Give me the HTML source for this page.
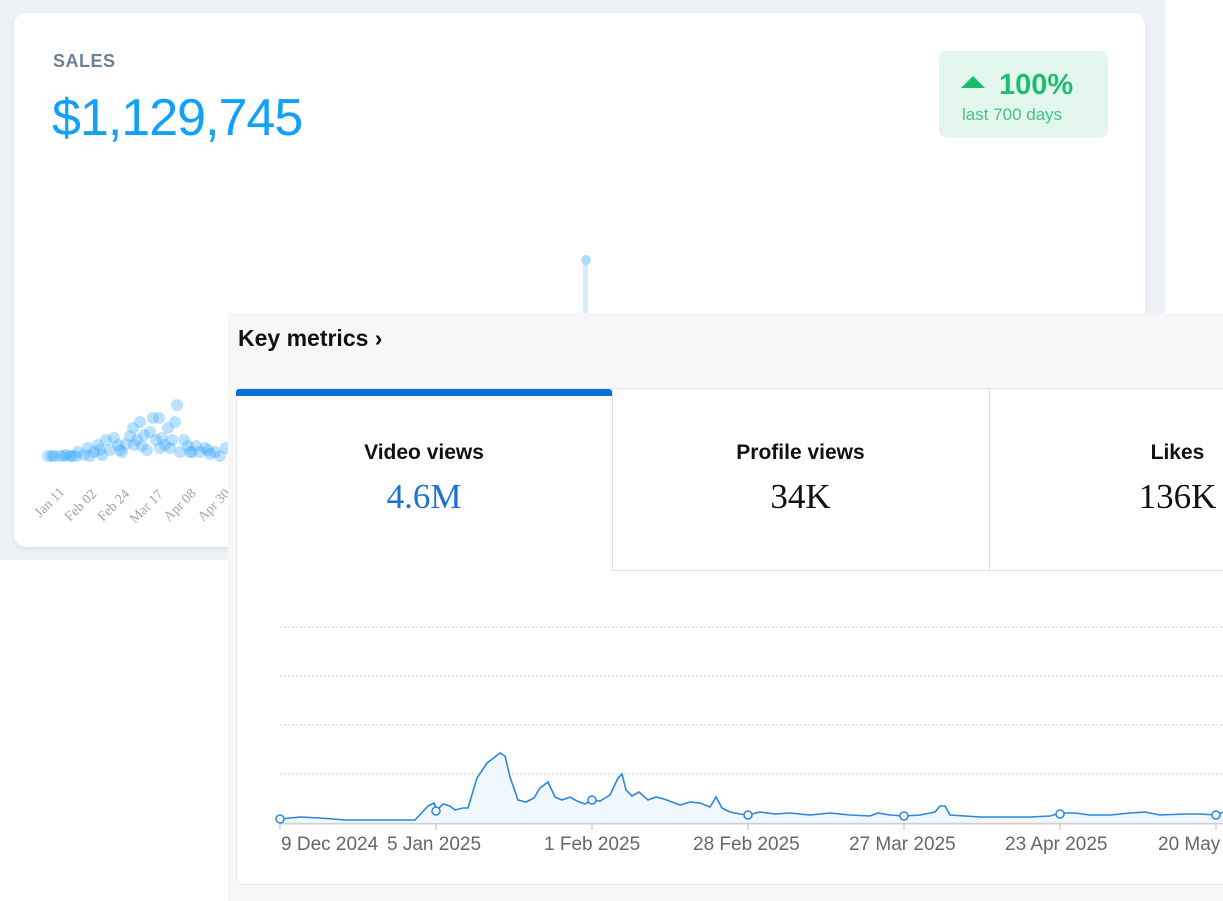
<!DOCTYPE html>
<html><head><meta charset="utf-8"><style>
*{margin:0;padding:0;box-sizing:border-box}
body{width:1223px;height:901px;overflow:hidden;background:#fff;font-family:"Liberation Sans",sans-serif;position:relative}
.bg{position:absolute;left:0;top:0;width:1165px;height:560px;background:#eef2f7}
.card{position:absolute;left:14px;top:13px;width:1131px;height:534px;background:#fff;border-radius:12px;box-shadow:0 2px 4px rgba(150,170,200,.25)}
.sales{position:absolute;left:53px;top:51px;font-size:18px;font-weight:bold;color:#6e7f93;letter-spacing:.5px}
.amt{position:absolute;left:52px;top:88px;font-size:52px;color:#11a0fa;letter-spacing:-1px}
.badge{position:absolute;left:939px;top:51px;width:169px;height:87px;background:#e3f7ee;border-radius:8px;color:#1fbd6e}
.badge .p{position:absolute;left:22px;top:18px;font-size:29px;font-weight:bold}
.badge .p:before{content:"";display:inline-block;width:0;height:0;border-left:12px solid transparent;border-right:12px solid transparent;border-bottom:12px solid #17bb6c;margin-right:14px;vertical-align:6px}
.badge .l{position:absolute;left:23px;top:54px;font-size:17px;color:#3fc585}
.km{position:absolute;left:228px;top:313px;width:995px;height:588px;background:#f7f7f7}
.kmt{position:absolute;left:238px;top:325px;font-size:23px;font-weight:bold;color:#111}
.inner{position:absolute;left:236px;top:388px;width:1000px;height:497px;background:#fff;border:1px solid #e6e6e6;border-radius:8px}
.bar{position:absolute;left:236px;top:389px;width:376px;height:7px;background:#0a6fd8;border-radius:3px 3px 0 0}
.tab{position:absolute;top:389px;height:182px;text-align:center}
.tab .n{position:absolute;top:52px;width:100%;font-size:21px;font-weight:bold;color:#111}
.tab .v{position:absolute;top:88px;width:100%;font-family:"Liberation Serif",serif;font-size:35px;color:#111}
.lbl{position:absolute;top:834px;font-size:19px;color:#666}
</style></head><body>
<div class="bg"></div>
<div class="card"></div>
<div class="sales">SALES</div>
<div class="amt">$1,129,745</div>
<div class="badge"><div class="p">100%</div><div class="l">last 700 days</div></div>
<svg style="position:absolute;left:0;top:0" width="1223" height="560">
<rect x="583" y="262" width="5" height="60" fill="#d4ecfd"/>
<circle cx="586" cy="260" r="5" fill="#aedcfd"/>
<g fill="#3aa8fb" fill-opacity=".35">
<circle cx="48" cy="456" r="6"/><circle cx="54" cy="456" r="6"/><circle cx="60" cy="456" r="6"/><circle cx="66" cy="455" r="6"/><circle cx="72" cy="456" r="6"/><circle cx="78" cy="452" r="6"/><circle cx="84" cy="455" r="6"/><circle cx="88" cy="448" r="6"/><circle cx="94" cy="452" r="6"/><circle cx="98" cy="445" r="6"/><circle cx="102" cy="455" r="6"/><circle cx="106" cy="440" r="6"/><circle cx="110" cy="450" r="6"/><circle cx="114" cy="438" r="6"/><circle cx="118" cy="445" r="6"/><circle cx="122" cy="452" r="6"/><circle cx="126" cy="444" r="6"/><circle cx="130" cy="436" r="6"/><circle cx="133" cy="428" r="6"/><circle cx="137" cy="440" r="6"/><circle cx="140" cy="422" r="6"/><circle cx="144" cy="435" r="6"/><circle cx="147" cy="450" r="6"/><circle cx="150" cy="432" r="6"/><circle cx="153" cy="418" r="6"/><circle cx="156" cy="440" r="6"/><circle cx="159" cy="418" r="6"/><circle cx="162" cy="438" r="6"/><circle cx="165" cy="445" r="6"/><circle cx="168" cy="428" r="6"/><circle cx="172" cy="440" r="6"/><circle cx="175" cy="422" r="6"/><circle cx="177" cy="405" r="6"/><circle cx="180" cy="452" r="6"/><circle cx="184" cy="440" r="6"/><circle cx="188" cy="446" r="6"/><circle cx="192" cy="452" r="6"/><circle cx="196" cy="446" r="6"/><circle cx="200" cy="452" r="6"/><circle cx="205" cy="448" r="6"/><circle cx="210" cy="454" r="6"/><circle cx="215" cy="452" r="6"/><circle cx="220" cy="456" r="6"/><circle cx="226" cy="448" r="6"/>
<circle cx="52" cy="456" r="6"/><circle cx="64" cy="456" r="6"/><circle cx="76" cy="456" r="6"/><circle cx="90" cy="456" r="6"/><circle cx="100" cy="450" r="6"/><circle cx="120" cy="450" r="6"/><circle cx="142" cy="446" r="6"/><circle cx="160" cy="448" r="6"/><circle cx="190" cy="452" r="6"/><circle cx="208" cy="450" r="6"/><circle cx="70" cy="456" r="6"/><circle cx="134" cy="445" r="6"/><circle cx="170" cy="448" r="6"/>
</g>
<g font-family="Liberation Serif,serif" font-size="14" fill="#9aa4b1">
<text transform="translate(40,518) rotate(-45)">Jan 11</text>
<text transform="translate(70,522) rotate(-45)">Feb 02</text>
<text transform="translate(103,522) rotate(-45)">Feb 24</text>
<text transform="translate(135,524) rotate(-45)">Mar 17</text>
<text transform="translate(169,522) rotate(-45)">Apr 08</text>
<text transform="translate(203,522) rotate(-45)">Apr 30</text>
</g>
</svg>
<div class="km"></div>
<div class="kmt">Key metrics ›</div>
<div class="inner"></div>
<div style="position:absolute;left:612px;top:389px;width:611px;height:182px;border-left:1px solid #e0e0e0;border-bottom:1px solid #e0e0e0"></div>
<div style="position:absolute;left:989px;top:389px;width:1px;height:182px;background:#e0e0e0"></div>
<div class="bar"></div>
<div class="tab" style="left:236px;width:376px"><div class="n">Video views</div><div class="v" style="color:#1a73d0">4.6M</div></div>
<div class="tab" style="left:612px;width:377px"><div class="n">Profile views</div><div class="v">34K</div></div>
<div class="tab" style="left:989px;width:377px"><div class="n">Likes</div><div class="v">136K</div></div>
<svg style="position:absolute;left:0;top:0" width="1223" height="901">
<g stroke="#cfcfcf" stroke-dasharray="2 2" stroke-width="1"><line x1="280" y1="627" x2="1223" y2="627"/><line x1="280" y1="676" x2="1223" y2="676"/><line x1="280" y1="725" x2="1223" y2="725"/><line x1="280" y1="774" x2="1223" y2="774"/></g>
<line x1="280" y1="823.5" x2="1223" y2="823.5" stroke="#d0d0d0" stroke-width="2"/>
<g stroke="#bbb"><line x1="280" y1="823" x2="280" y2="830"/><line x1="436" y1="823" x2="436" y2="830"/><line x1="592" y1="823" x2="592" y2="830"/><line x1="748" y1="823" x2="748" y2="830"/><line x1="904" y1="823" x2="904" y2="830"/><line x1="1060" y1="823" x2="1060" y2="830"/><line x1="1216" y1="823" x2="1216" y2="830"/></g>
<path d="M280,819 L300,817 L320,818 L345,820 L380,820 L415,820 L428,806 L434,803 L437,810 L443,804 L450,806 L455,810 L463,808 L468,808 L477,778 L487,763 L500,753 L505,756 L510,777 L518,800 L526,802 L534,798 L540,788 L548,782 L555,797 L562,800 L570,797 L577,801 L585,804 L592,800 L600,801 L610,795 L618,778 L622,774 L626,790 L632,796 L639,792 L648,800 L656,797 L664,799 L672,802 L680,805 L690,802 L700,803 L710,807 L716,797 L722,808 L730,812 L740,814 L748,815 L760,812 L775,814 L790,813 L810,815 L830,813 L850,815 L870,816 L878,813 L890,815 L904,816 L920,815 L935,812 L940,806 L945,806 L950,815 L980,817 L1000,817 L1030,817 L1050,816 L1060,813 L1075,813 L1090,815 L1110,815 L1130,813 L1145,812 L1160,815 L1185,814 L1200,814 L1216,815 L1223,812 L1223,823 L280,823 Z" fill="#eaf3fd" fill-opacity=".7"/>
<path d="M280,819 L300,817 L320,818 L345,820 L380,820 L415,820 L428,806 L434,803 L437,810 L443,804 L450,806 L455,810 L463,808 L468,808 L477,778 L487,763 L500,753 L505,756 L510,777 L518,800 L526,802 L534,798 L540,788 L548,782 L555,797 L562,800 L570,797 L577,801 L585,804 L592,800 L600,801 L610,795 L618,778 L622,774 L626,790 L632,796 L639,792 L648,800 L656,797 L664,799 L672,802 L680,805 L690,802 L700,803 L710,807 L716,797 L722,808 L730,812 L740,814 L748,815 L760,812 L775,814 L790,813 L810,815 L830,813 L850,815 L870,816 L878,813 L890,815 L904,816 L920,815 L935,812 L940,806 L945,806 L950,815 L980,817 L1000,817 L1030,817 L1050,816 L1060,813 L1075,813 L1090,815 L1110,815 L1130,813 L1145,812 L1160,815 L1185,814 L1200,814 L1216,815 L1223,812" fill="none" stroke="#2b86dc" stroke-width="1.6"/>
<g fill="#fff" stroke="#2b86dc" stroke-width="1.5"><circle cx="280" cy="819" r="4"/><circle cx="436" cy="811" r="4"/><circle cx="592" cy="800" r="4"/><circle cx="748" cy="815" r="4"/><circle cx="904" cy="816" r="4"/><circle cx="1060" cy="814" r="4"/><circle cx="1216" cy="815" r="4"/></g>
</svg>
<div class="lbl" style="left:281px">9 Dec 2024</div>
<div class="lbl" style="left:387px">5 Jan 2025</div>
<div class="lbl" style="left:544px">1 Feb 2025</div>
<div class="lbl" style="left:693px">28 Feb 2025</div>
<div class="lbl" style="left:849px">27 Mar 2025</div>
<div class="lbl" style="left:1005px">23 Apr 2025</div>
<div class="lbl" style="left:1158px;white-space:nowrap">20 May 2025</div>
</body></html>
